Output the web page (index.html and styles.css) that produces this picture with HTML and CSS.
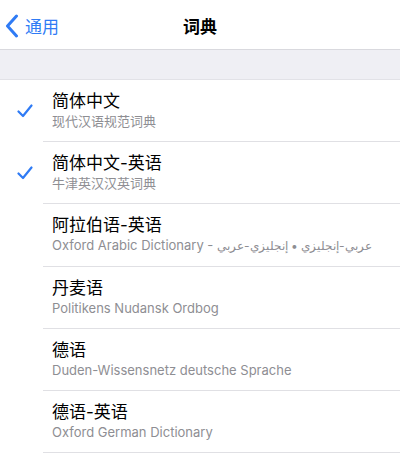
FILE: index.html
```html
<!DOCTYPE html>
<html lang="zh-CN">
<head>
    <meta charset="UTF-8">
    <meta name="viewport" content="width=device-width, initial-scale=1.0">
    <title>词典</title>
    <link rel="stylesheet" href="styles.css">
</head>
<body>
    <div class="navbar">
        <div class="back">
            <svg width="14" height="24" viewBox="0 0 14 24">
                <path d="M11.5 2 L2.5 12 L11.5 22" fill="none" stroke="#2f7bf5" stroke-width="3" stroke-linecap="round" stroke-linejoin="round"/>
            </svg>
            <span>通用</span>
        </div>
        <div class="title">词典</div>
    </div>

    <div class="band"></div>

    <div class="list">
        <div class="row">
            <div class="check">
                <svg width="16" height="14" viewBox="0 0 16 14">
                    <path d="M1.5 7.5 L6 12 L14.5 1.5" fill="none" stroke="#2f7bf5" stroke-width="2.2" stroke-linecap="round" stroke-linejoin="round"/>
                </svg>
            </div>
            <div class="cell">
                <div class="name">简体中文</div>
                <div class="sub">现代汉语规范词典</div>
            </div>
        </div>
        <div class="row">
            <div class="check">
                <svg width="16" height="14" viewBox="0 0 16 14">
                    <path d="M1.5 7.5 L6 12 L14.5 1.5" fill="none" stroke="#2f7bf5" stroke-width="2.2" stroke-linecap="round" stroke-linejoin="round"/>
                </svg>
            </div>
            <div class="cell">
                <div class="name">简体中文-英语</div>
                <div class="sub">牛津英汉汉英词典</div>
            </div>
        </div>
        <div class="row">
            <div class="check"></div>
            <div class="cell">
                <div class="name">阿拉伯语-英语</div>
                <div class="sub">Oxford Arabic Dictionary - <span class="ar">عربي-إنجليزي • إنجليزي-عربي</span></div>
            </div>
        </div>
        <div class="row">
            <div class="check"></div>
            <div class="cell">
                <div class="name">丹麦语</div>
                <div class="sub">Politikens Nudansk Ordbog</div>
            </div>
        </div>
        <div class="row">
            <div class="check"></div>
            <div class="cell">
                <div class="name">德语</div>
                <div class="sub">Duden-Wissensnetz deutsche Sprache</div>
            </div>
        </div>
        <div class="row">
            <div class="check"></div>
            <div class="cell">
                <div class="name">德语-英语</div>
                <div class="sub">Oxford German Dictionary</div>
            </div>
        </div>
    </div>
</body>
</html>
```

FILE: styles.css
```css
body {
    margin: 0;
    background: #fff;
    font-family: Inter, "Noto Sans CJK SC", sans-serif;
    color: #000;
}

.navbar {
    height: 49px;
    border-bottom: 1px solid #d9d9de;
    display: flex;
    align-items: center;
    justify-content: center;
    position: relative;
}

.back {
    position: absolute;
    left: 5px;
    top: 13px;
    display: flex;
    align-items: center;
    gap: 6px;
    color: #2f7bf5;
    font-size: 17px;
}

.title {
    font-size: 17px;
    font-weight: bold;
    padding-top: 2px;
}

.band {
    height: 29px;
    background: #efeff4;
    border-bottom: 1px solid #e2e2e7;
}

.row {
    display: flex;
}

.check {
    width: 43px;
    flex-shrink: 0;
    display: flex;
    align-items: center;
    justify-content: center;
    padding-left: 6px;
    box-sizing: border-box;
}

.cell {
    flex: 1;
    padding: 11px 0 12px 9px;
    border-bottom: 1px solid #e0e0e4;
}

.name {
    font-size: 17px;
    line-height: 20px;
}

.sub {
    margin-top: 2px;
    font-size: 13px;
    line-height: 16px;
    color: #8e8e93;
}

.ar {
    font-size: 12px;
}
```
